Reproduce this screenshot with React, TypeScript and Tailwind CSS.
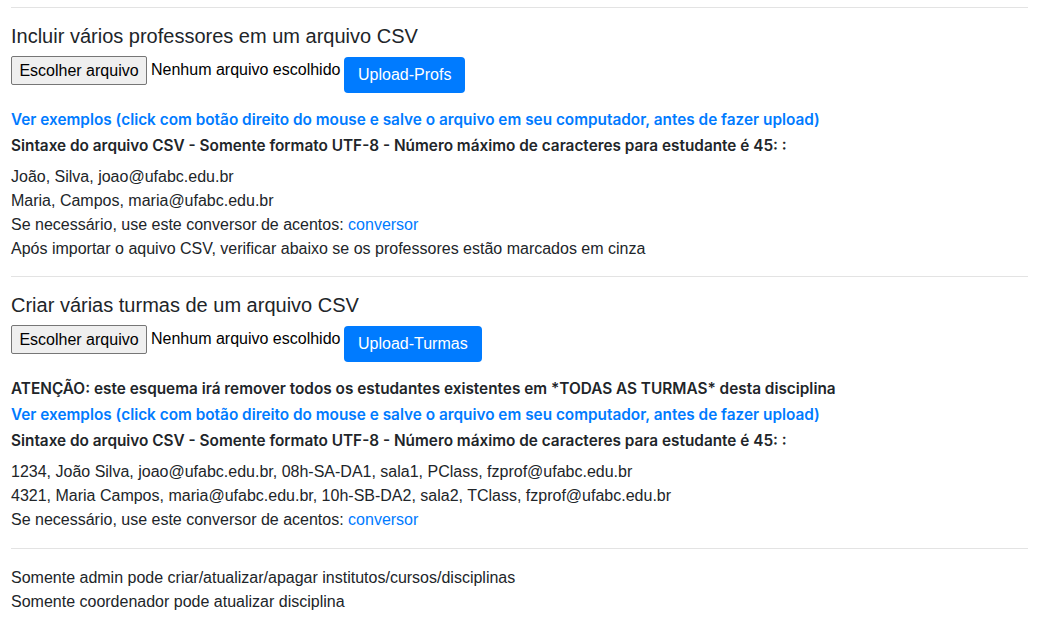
export default function App() {
  return (
    <div
      className="w-[1040px] h-[618px] bg-white text-[#212529] text-[16px] leading-6 px-[11px] pr-[12px] pt-[7px] overflow-hidden"
      style={{ fontFamily: '"Liberation Sans", Arial, sans-serif' }}
    >
      <hr className="border-0 border-t border-[#e3e3e3]" />
      <Section
        title="Incluir vários professores em um arquivo CSV"
        uploadLabel="Upload-Profs"
        warning={null}
        lines={["João, Silva, joao@ufabc.edu.br", "Maria, Campos, maria@ufabc.edu.br"]}
        extra="Após importar o aquivo CSV, verificar abaixo se os professores estão marcados em cinza"
      />
      <hr className="border-0 border-t border-[#e3e3e3] mt-[15px]" />
      <Section
        title="Criar várias turmas de um arquivo CSV"
        uploadLabel="Upload-Turmas"
        warning="ATENÇÃO: este esquema irá remover todos os estudantes existentes em *TODAS AS TURMAS* desta disciplina"
        lines={[
          "1234, João Silva, joao@ufabc.edu.br, 08h-SA-DA1, sala1, PClass, fzprof@ufabc.edu.br",
          "4321, Maria Campos, maria@ufabc.edu.br, 10h-SB-DA2, sala2, TClass, fzprof@ufabc.edu.br",
        ]}
        extra={null}
      />
      <hr className="border-0 border-t border-[#e3e3e3] mt-4" />
      <div className="mt-[17px]">
        <div>Somente admin pode criar/atualizar/apagar institutos/cursos/disciplinas</div>
        <div>Somente coordenador pode atualizar disciplina</div>
      </div>
    </div>
  );
}

function Section({
  title,
  uploadLabel,
  warning,
  lines,
  extra,
}: {
  title: string;
  uploadLabel: string;
  warning: string | null;
  lines: string[];
  extra: string | null;
}) {
  return (
    <div className="mt-4">
      <h4 className="text-[20px] leading-6 font-medium">{title}</h4>
      <div className="flex items-start mt-2">
        <button className="h-[29px] w-[136px] bg-[#efefef] border border-[#767676] rounded-[2px] text-[16px] text-black">
          Escolher arquivo
        </button>
        <span className="ml-[4px] mt-[2px] w-[193px] text-black">Nenhum arquivo escolhido</span>
        <button className="mt-px h-[36px] px-[14px] bg-[#007bff] text-white rounded-[4px] text-[16px]">
          {uploadLabel}
        </button>
      </div>
      <div className="mt-4 text-[15.35px] leading-[22px] font-semibold font-['Inter',sans-serif]">
        {warning && <div className="mb-1">{warning}</div>}
        <a className="text-[#007bff] block">
          Ver exemplos (click com botão direito do mouse e salve o arquivo em seu computador, antes de fazer upload)
        </a>
        <div className="mt-1">
          Sintaxe do arquivo CSV - Somente formato UTF-8 - Número máximo de caracteres para estudante é 45: :
        </div>
      </div>
      <div className="mt-2">
        {lines.map((l) => (
          <div key={l}>{l}</div>
        ))}
        <div>
          Se necessário, use este conversor de acentos: <a className="text-[#007bff]">conversor</a>
        </div>
        {extra && <div>{extra}</div>}
      </div>
    </div>
  );
}
